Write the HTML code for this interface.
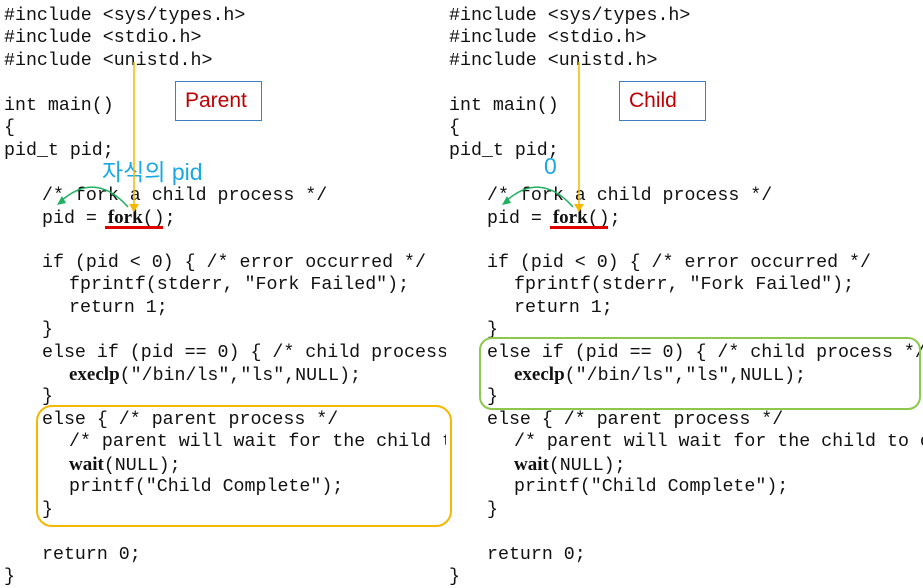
<!DOCTYPE html>
<html><head><meta charset="utf-8"><style>
body{margin:0;width:923px;height:585px;background:#fff;position:relative;overflow:hidden}
.col{position:absolute;top:5px;font-family:"Liberation Mono",monospace;font-size:18.3px;color:#111;overflow:hidden}
.col div{height:22.45px;line-height:22.45px;white-space:pre}
.i1{padding-left:38px}.i2{padding-left:65px}
b{font-family:"Liberation Serif",serif;font-weight:bold;font-size:19px}
.box{position:absolute;border:1.5px solid #3a7fc1;font-family:"Liberation Sans",sans-serif;font-size:21px;color:#c00000;box-sizing:border-box;padding-left:9px;line-height:38px}
</style></head><body>
<div class="col" style="left:4px;width:442px"><div>#include &lt;sys/types.h&gt;</div><div>#include &lt;stdio.h&gt;</div><div>#include &lt;unistd.h&gt;</div><div></div><div>int main()</div><div>{</div><div>pid_t pid;</div><div></div><div class="i1">/* fork a child process */</div><div class="i1">pid = <b>fork</b>();</div><div></div><div class="i1">if (pid &lt; 0) { /* error occurred */</div><div class="i2">fprintf(stderr, "Fork Failed");</div><div class="i2">return 1;</div><div class="i1">}</div><div class="i1">else if (pid == 0) { /* child process */</div><div class="i2"><b>execlp</b>("/bin/ls","ls",NULL);</div><div class="i1">}</div><div class="i1">else { /* parent process */</div><div class="i2">/* parent will wait for the child to complete */</div><div class="i2"><b>wait</b>(NULL);</div><div class="i2">printf("Child Complete");</div><div class="i1">}</div><div></div><div class="i1">return 0;</div><div>}</div></div>
<div class="col" style="left:449px;width:474px"><div>#include &lt;sys/types.h&gt;</div><div>#include &lt;stdio.h&gt;</div><div>#include &lt;unistd.h&gt;</div><div></div><div>int main()</div><div>{</div><div>pid_t pid;</div><div></div><div class="i1">/* fork a child process */</div><div class="i1">pid = <b>fork</b>();</div><div></div><div class="i1">if (pid &lt; 0) { /* error occurred */</div><div class="i2">fprintf(stderr, "Fork Failed");</div><div class="i2">return 1;</div><div class="i1">}</div><div class="i1">else if (pid == 0) { /* child process */</div><div class="i2"><b>execlp</b>("/bin/ls","ls",NULL);</div><div class="i1">}</div><div class="i1">else { /* parent process */</div><div class="i2">/* parent will wait for the child to complete */</div><div class="i2"><b>wait</b>(NULL);</div><div class="i2">printf("Child Complete");</div><div class="i1">}</div><div></div><div class="i1">return 0;</div><div>}</div></div>
<div class="box" style="left:175px;top:81px;width:87px;height:40px">Parent</div>
<div class="box" style="left:619px;top:81px;width:87px;height:40px">Child</div>
<div style="position:absolute;left:102px;top:153px;font-family:'Liberation Sans','Noto Sans CJK KR',sans-serif;font-size:23px;color:#1aa8e6">자식의 pid</div>
<div style="position:absolute;left:544px;top:153px;font-family:'Liberation Sans',sans-serif;font-size:23px;color:#1aa8e6">0</div>
<svg width="923" height="585" style="position:absolute;left:0;top:0">
<g fill="none" stroke-width="1.5">
<line x1="134" y1="62" x2="134" y2="206" stroke="#f5b800"/>
<line x1="579" y1="62" x2="579" y2="206" stroke="#f5b800"/>
<path d="M128 207 Q95 170 60 202" stroke="#20b060"/>
<path d="M573 207 Q540 170 505 202" stroke="#20b060"/>
<rect x="37" y="406" width="414" height="120" rx="15" stroke="#f5b800" stroke-width="2"/>
<rect x="480" y="338" width="440" height="71" rx="12" stroke="#8cc84b" stroke-width="2"/>
</g>
<polygon points="129,204 139,204 134,212" fill="#f5b800"/>
<polygon points="574,204 584,204 579,212" fill="#f5b800"/>
<polygon points="57,205 62,196 66,203" fill="#20b060"/>
<polygon points="502,205 507,196 511,203" fill="#20b060"/>
<rect x="105" y="226" width="58" height="3" fill="#e00000"/>
<rect x="550" y="226" width="58" height="3" fill="#e00000"/>
</svg>
</body></html>
